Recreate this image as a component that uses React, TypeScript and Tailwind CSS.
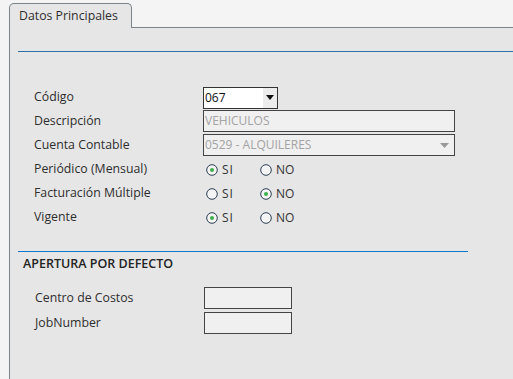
import React from "react";

const font = { fontFamily: '"Open Sans", "DejaVu Sans", sans-serif' };

function Radio({ checked }: { checked: boolean }) {
  return (
    <svg width="12" height="12" viewBox="0 0 12 12" className="shrink-0">
      <circle cx="6" cy="6" r="5.3" fill="#f4f4f4" stroke="#2d3f55" strokeWidth="1" />
      {checked && <circle cx="6" cy="6" r="2" fill="#3cb04a" />}
    </svg>
  );
}

function RadioPair({ si }: { si: boolean }) {
  return (
    <div className="flex items-center">
      <div className="flex items-center w-[54px] gap-[4px]">
        <Radio checked={si} />
        <span className="text-[12px] text-[#333] tracking-[1px]">SI</span>
      </div>
      <div className="flex items-center gap-[4px]">
        <Radio checked={!si} />
        <span className="text-[12px] text-[#333]">NO</span>
      </div>
    </div>
  );
}

export default function App() {
  const label = "w-[169px] text-[12.3px] text-[#2e2e2e] leading-none";
  return (
    <div
      className="w-[513px] h-[379px] bg-[#f4f4f4] overflow-hidden pl-[9px] pt-[3px] flex flex-col"
      style={font}
    >
      <div className="flex h-[25px] shrink-0">
        <div className="w-[123px] h-[25px] border-l border-t border-r border-[#7b8489] rounded-t-[5px] bg-[#e6e6e6] flex items-center pl-[9px] pt-[1px] text-[12.3px] text-[#2e2e2e]">
          Datos Principales
        </div>
        <div className="flex-1 border-b border-[#7b8489]" />
      </div>
      <div className="flex-1 border-l border-[#7b8489] bg-[#e6e6e6] flex flex-col">
        <div className="ml-[8px] mt-[23px] h-[1px] bg-[#2c6ea6]" />
        <div className="pl-[24px] mt-[34px] flex flex-col">
          <div className="flex items-center h-[23px]">
            <div className={label}>Código</div>
            <div className="w-[75px] h-[22px] border border-[#333] bg-white flex items-center">
              <span className="flex-1 pl-[1px] text-[12px] text-[#111]">067</span>
              <div className="w-[14px] h-[20px] bg-[#ececec] flex items-center justify-center">
                <svg width="8" height="5" viewBox="0 0 8 5"><path d="M0 0H8L4 5Z" fill="#111" /></svg>
              </div>
            </div>
          </div>
          <div className="flex items-center h-[24px]">
            <div className={label}>Descripción</div>
            <div className="w-[252px] h-[22px] border border-[#444] bg-[#f0f0f0] flex items-center pl-[1px] text-[12px] text-[#a3a3a3]">
              VEHICULOS
            </div>
          </div>
          <div className="flex items-center h-[24px]">
            <div className={label}>Cuenta Contable</div>
            <div className="w-[252px] h-[22px] border border-[#444] bg-[#f0f0f0] flex items-center pl-[1px] text-[12px] text-[#a3a3a3]">
              <span className="flex-1">0529 - ALQUILERES</span>
              <svg width="9" height="5" viewBox="0 0 9 5" className="mr-[5px]"><path d="M0 0H9L4.5 5Z" fill="#999" /></svg>
            </div>
          </div>
          <div className="flex items-center h-[24px] pt-[1px]">
            <div className={label}>Periódico (Mensual)</div>
            <div className="pl-[3px]"><RadioPair si={true} /></div>
          </div>
          <div className="flex items-center h-[24px] pt-[1px]">
            <div className={label}>Facturación Múltiple</div>
            <div className="pl-[3px]"><RadioPair si={false} /></div>
          </div>
          <div className="flex items-center h-[24px] pt-[1px]">
            <div className={label}>Vigente</div>
            <div className="pl-[3px]"><RadioPair si={true} /></div>
          </div>
        </div>
        <div className="ml-[8px] mt-[22px] w-[450px] h-[1px] bg-[#0e79cc]" />
        <div className="pl-[13px] mt-[1px] h-[22px] flex items-center text-[12.5px] text-[#222] font-semibold">
          APERTURA POR DEFECTO
        </div>
        <div className="pl-[25px] mt-[12px] flex flex-col gap-[3px]">
          <div className="flex items-center h-[22px]">
            <div className="w-[169px] text-[12.3px] text-[#2e2e2e]">Centro de Costos</div>
            <div className="w-[88px] h-[22px] border border-[#444] bg-[#f0f0f0]" />
          </div>
          <div className="flex items-center h-[22px]">
            <div className="w-[169px] text-[12.3px] text-[#2e2e2e]">JobNumber</div>
            <div className="w-[88px] h-[22px] border border-[#444] bg-[#f0f0f0]" />
          </div>
        </div>
      </div>
    </div>
  );
}
